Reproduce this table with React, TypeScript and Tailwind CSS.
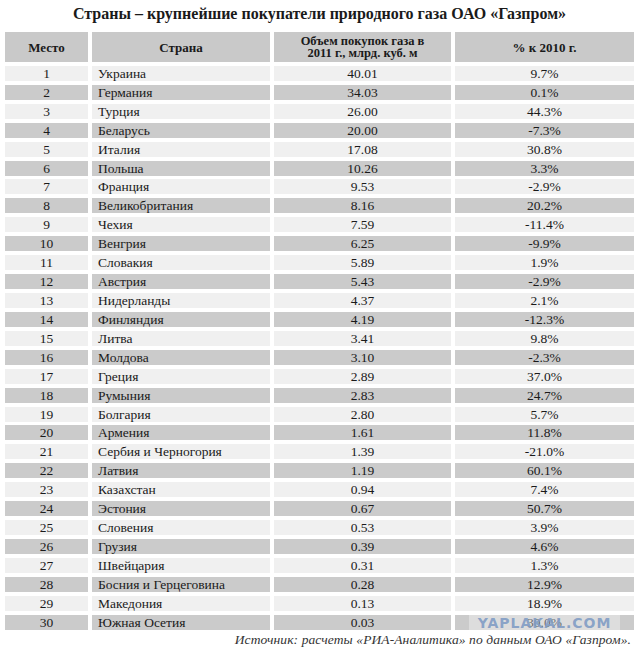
import React from 'react';

const rows: [string, string, string][] = [
	['Украина', '40.01', '9.7%'],
	['Германия', '34.03', '0.1%'],
	['Турция', '26.00', '44.3%'],
	['Беларусь', '20.00', '-7.3%'],
	['Италия', '17.08', '30.8%'],
	['Польша', '10.26', '3.3%'],
	['Франция', '9.53', '-2.9%'],
	['Великобритания', '8.16', '20.2%'],
	['Чехия', '7.59', '-11.4%'],
	['Венгрия', '6.25', '-9.9%'],
	['Словакия', '5.89', '1.9%'],
	['Австрия', '5.43', '-2.9%'],
	['Нидерланды', '4.37', '2.1%'],
	['Финляндия', '4.19', '-12.3%'],
	['Литва', '3.41', '9.8%'],
	['Молдова', '3.10', '-2.3%'],
	['Греция', '2.89', '37.0%'],
	['Румыния', '2.83', '24.7%'],
	['Болгария', '2.80', '5.7%'],
	['Армения', '1.61', '11.8%'],
	['Сербия и Черногория', '1.39', '-21.0%'],
	['Латвия', '1.19', '60.1%'],
	['Казахстан', '0.94', '7.4%'],
	['Эстония', '0.67', '50.7%'],
	['Словения', '0.53', '3.9%'],
	['Грузия', '0.39', '4.6%'],
	['Швейцария', '0.31', '1.3%'],
	['Босния и Герцеговина', '0.28', '12.9%'],
	['Македония', '0.13', '18.9%'],
	['Южная Осетия', '0.03', '30.0%'],
];

export default function App() {
	return (
		<div className="relative w-[639px] h-[654px] bg-white text-[#1a1a1a] font-['Liberation_Serif',serif]">
			{/* Title */}
			<h1 className="pt-[4px] h-[32px] text-center text-[16px] font-bold leading-[20px]">
				Страны – крупнейшие покупатели природного газа ОАО «Газпром»
			</h1>

			{/* Table */}
			<div className="ml-[5px] grid grid-cols-[83px_178px_177px_179px] gap-x-[4px] gap-y-[3.93px] text-[13.5px] leading-[15px]">
				<div className="h-[30px] bg-[#c9c9c9] flex items-center justify-center font-bold text-[13px]">Место</div>
				<div className="h-[30px] bg-[#c9c9c9] flex items-center justify-center font-bold text-[13px]">Страна</div>
				<div className="h-[30px] bg-[#c9c9c9] flex items-center justify-center text-center font-bold text-[12.5px] leading-[12.5px]">
					Объем покупок газа в<br />2011 г., млрд. куб. м
				</div>
				<div className="h-[30px] bg-[#c9c9c9] flex items-center justify-center font-bold text-[13px]">% к 2010 г.</div>

				{rows.map(([country, volume, change], i) => {
					const bg = i % 2 === 0 ? 'bg-[#f0f0f0]' : 'bg-[#cbcbcb]';
					return (
						<React.Fragment key={i}>
							<div className={`h-[15px] ${bg} text-center`}>{i + 1}</div>
							<div className={`h-[15px] ${bg} pl-[6px]`}>{country}</div>
							<div className={`h-[15px] ${bg} text-center`}>{volume}</div>
							<div className={`h-[15px] ${bg} text-center`}>{change}</div>
						</React.Fragment>
					);
				})}
			</div>

			{/* Source */}
			<p className="mt-[2px] pr-[8px] text-right italic text-[13.5px] leading-[16px] tracking-[0.1px] text-[#333]">
				Источник: расчеты «РИА-Аналитика» по данным ОАО «Газпром».
			</p>

			{/* Watermark */}
			<div className="absolute left-[469px] top-[614px] w-[151px] h-[17px] bg-white/35 flex items-center justify-center">
				<span className="font-['DejaVu_Sans',sans-serif] font-bold text-[14px] leading-[14px] tracking-[1px] text-[#7f9bc4]/90">
					YAPLAKAL.COM
				</span>
			</div>
		</div>
	);
}
